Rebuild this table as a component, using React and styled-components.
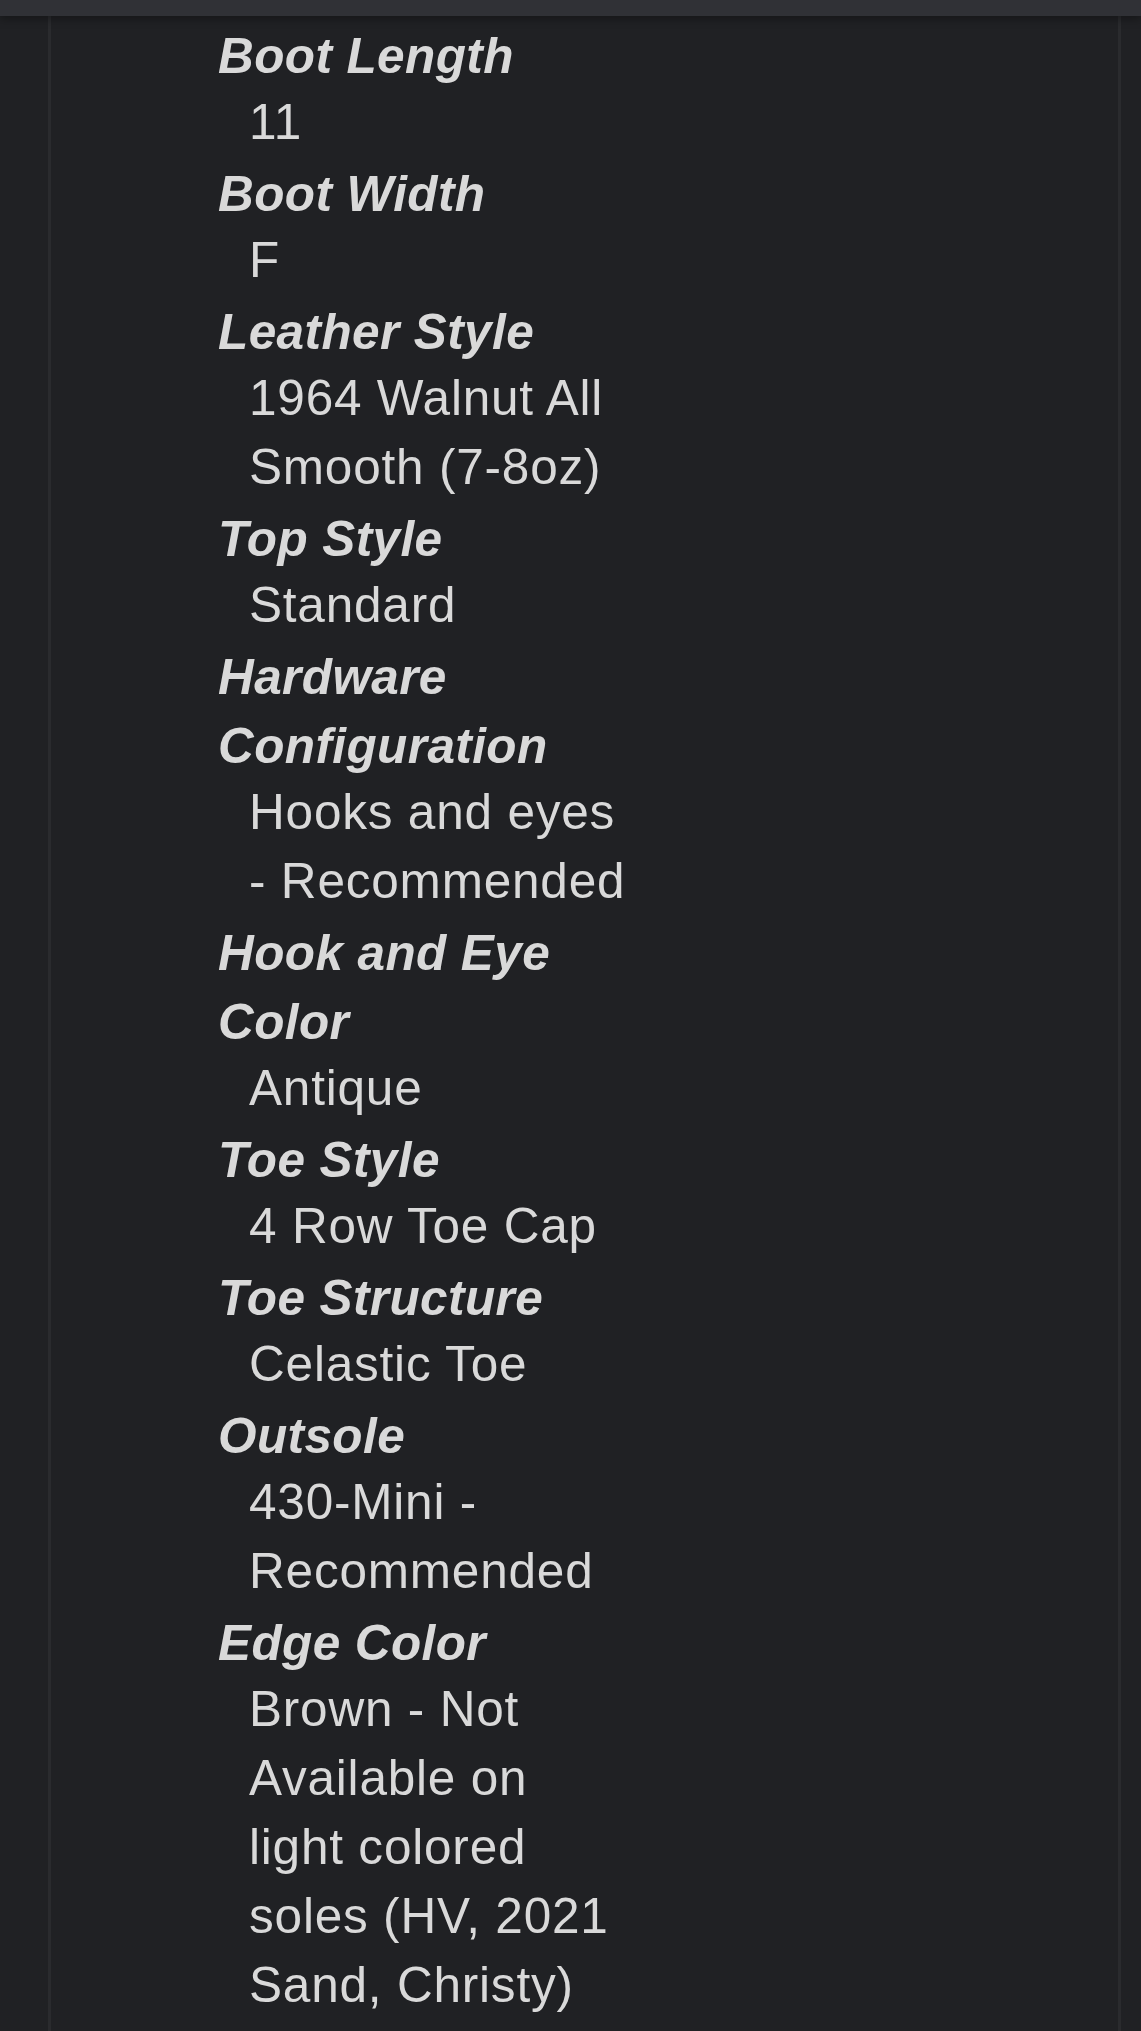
import styled, { createGlobalStyle } from 'styled-components'

const specs = [
  { label: 'Boot Length', value: '11' },
  { label: 'Boot Width', value: 'F' },
  { label: 'Leather Style', value: '1964 Walnut All Smooth (7-8oz)' },
  { label: 'Top Style', value: 'Standard' },
  { label: 'Hardware Configuration', value: 'Hooks and eyes - Recommended' },
  { label: 'Hook and Eye Color', value: 'Antique' },
  { label: 'Toe Style', value: '4 Row Toe Cap' },
  { label: 'Toe Structure', value: 'Celastic Toe' },
  { label: 'Outsole', value: '430-Mini - Recommended' },
  {
    label: 'Edge Color',
    value: 'Brown - Not Available on light colored soles (HV, 2021 Sand, Christy)',
  },
]

function App() {
  return (
    <>
      <GlobalStyle />
      <Page>
        <TopBar />
        <Panel>
          <SpecList>
            {specs.map((item) => (
              <Spec key={item.label}>
                <Term>{item.label}</Term>
                <Detail>{item.value}</Detail>
              </Spec>
            ))}
          </SpecList>
        </Panel>
      </Page>
    </>
  )
}

const GlobalStyle = createGlobalStyle`
  html, body {
    margin: 0;
    padding: 0;
    background-color: #202124;
  }

  body {
    font-family: "Liberation Sans", Arial, Helvetica, sans-serif;
  }
`

const Page = styled.div`
  display: flex;
  flex-direction: column;
  min-height: 2031px;
  overflow: hidden;
  background-color: #202124;
`

const TopBar = styled.div`
  position: relative;
  z-index: 2;
  height: 16px;
  flex-shrink: 0;
  background-color: #303136;
  box-shadow: 0 3px 10px rgba(0, 0, 0, 0.35);
`

const Panel = styled.main`
  flex: 1;
  margin: 0 20px 0 48px;
  padding: 5px 0 0 167px;
  border-left: 3px solid #2a2b2e;
  border-right: 3px solid #2a2b2e;
  background-color: #202124;
`

const SpecList = styled.dl`
  width: 414px;
  margin: 0;
  font-size: 49.5px;
  line-height: 69px;
  color: #d9d9d9;
`

const Spec = styled.div`
  display: flex;
  flex-direction: column;
`

const Term = styled.dt`
  margin: 0;
  font-weight: 700;
  font-style: italic;
  letter-spacing: 0.4px;
`

const Detail = styled.dd`
  margin: -3px 0 3px 0;
  padding-left: 31px;
  font-weight: 400;
  letter-spacing: 0.8px;
`

export default App
